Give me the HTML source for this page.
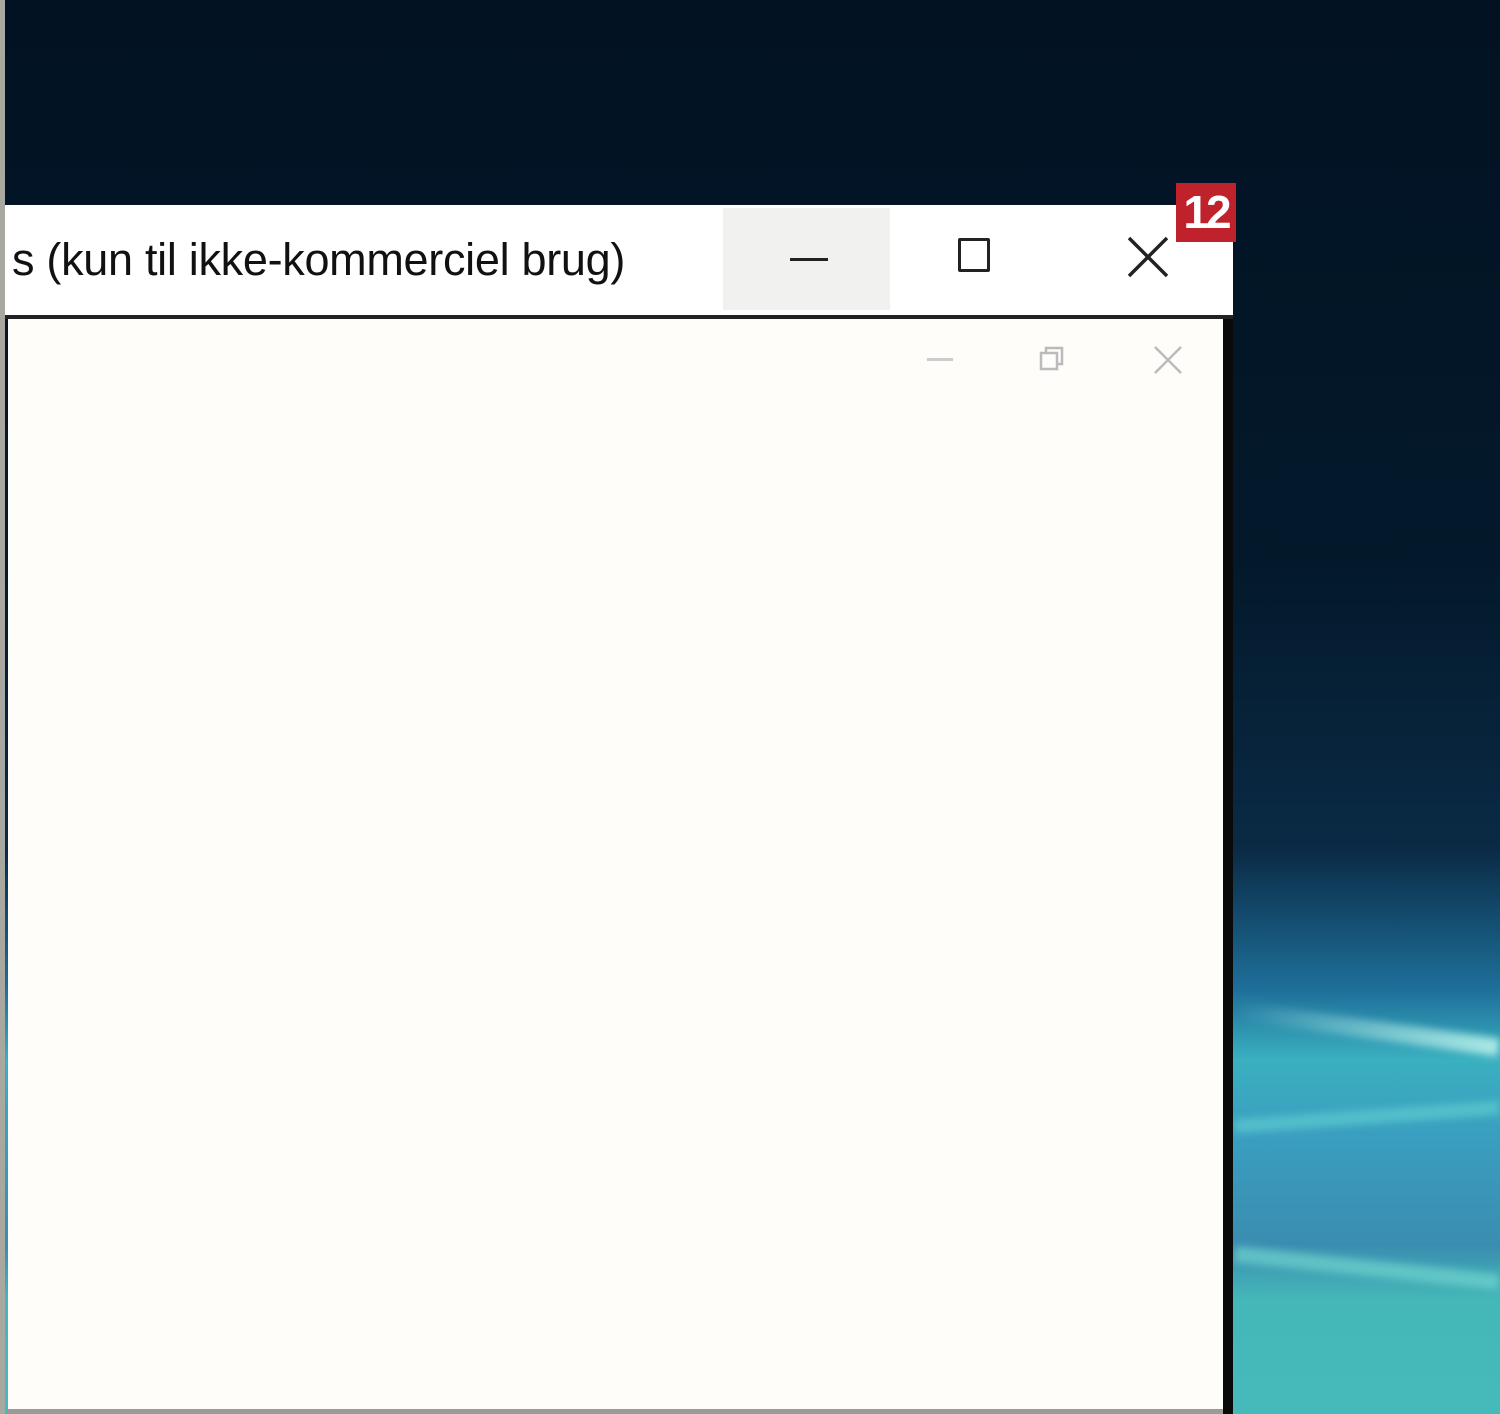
<!DOCTYPE html>
<html><head><style>
body{margin:0;width:1500px;height:1414px;overflow:hidden;position:relative;
background:linear-gradient(180deg,#021222 0%,#03192b 40%,#0a2a45 60%,#1e6f9a 70%,#3ab0c0 75%,#3a9fc0 80%,#3a8db0 88%,#44b8b8 92%,#46baba 100%);font-family:"Liberation Sans",sans-serif}
.abs{position:absolute}
</style></head><body>
<div class="abs" style="left:1234px;top:1020px;width:266px;height:18px;background:linear-gradient(90deg,rgba(120,220,220,0),rgba(200,250,240,.8));transform:rotate(8deg);filter:blur(4px)"></div>
<div class="abs" style="left:1234px;top:1110px;width:266px;height:14px;background:rgba(100,210,210,.6);transform:rotate(-4deg);filter:blur(4px)"></div>
<div class="abs" style="left:1234px;top:1260px;width:266px;height:16px;background:rgba(120,220,210,.6);transform:rotate(6deg);filter:blur(4px)"></div>
<div class="abs" style="left:0;top:0;width:5px;height:1414px;background:#a8a8a0"></div>
<div class="abs" style="left:5px;top:205px;width:1228px;height:111px;background:#fff"></div>
<div class="abs" style="left:723px;top:208px;width:167px;height:102px;background:#f1f1ef"></div>
<div class="abs" style="left:12px;top:234px;font-size:45px;color:#111;letter-spacing:-0.3px;white-space:nowrap">s (kun til ikke-kommerciel brug)</div>
<div class="abs" style="left:790px;top:258px;width:38px;height:3px;background:#222"></div>
<div class="abs" style="left:958px;top:238px;width:32px;height:34px;border:3px solid #222;border-radius:2px;box-sizing:border-box"></div>
<svg class="abs" style="left:1126px;top:235px" width="44" height="44"><path d="M3 3L41 41M41 3L3 41" stroke="#222" stroke-width="3.5"/></svg>
<div class="abs" style="left:1176px;top:183px;width:60px;height:59px;background:#c0222b;color:#fff;font-weight:bold;font-size:46px;line-height:59px;text-align:center;letter-spacing:-3px">12</div>
<div class="abs" style="left:5px;top:315px;width:1228px;height:4px;background:#222"></div>
<div class="abs" style="left:8px;top:319px;width:1215px;height:1091px;background:#fefdfa"></div>
<div class="abs" style="left:1223px;top:319px;width:10px;height:1095px;background:#0a0a0a"></div>
<div class="abs" style="left:8px;top:1409px;width:1215px;height:5px;background:#9a9a96"></div>
<div class="abs" style="left:927px;top:358px;width:26px;height:3px;background:#ccc"></div>
<svg class="abs" style="left:1038px;top:344px" width="30" height="30"><path d="M3 9h16v16H3z M8 9V4h16v16h-5" fill="none" stroke="#bbb" stroke-width="2.5"/></svg>
<svg class="abs" style="left:1153px;top:345px" width="30" height="30"><path d="M2 2L28 28M28 2L2 28" stroke="#bbb" stroke-width="2.5"/></svg>
</body></html>
